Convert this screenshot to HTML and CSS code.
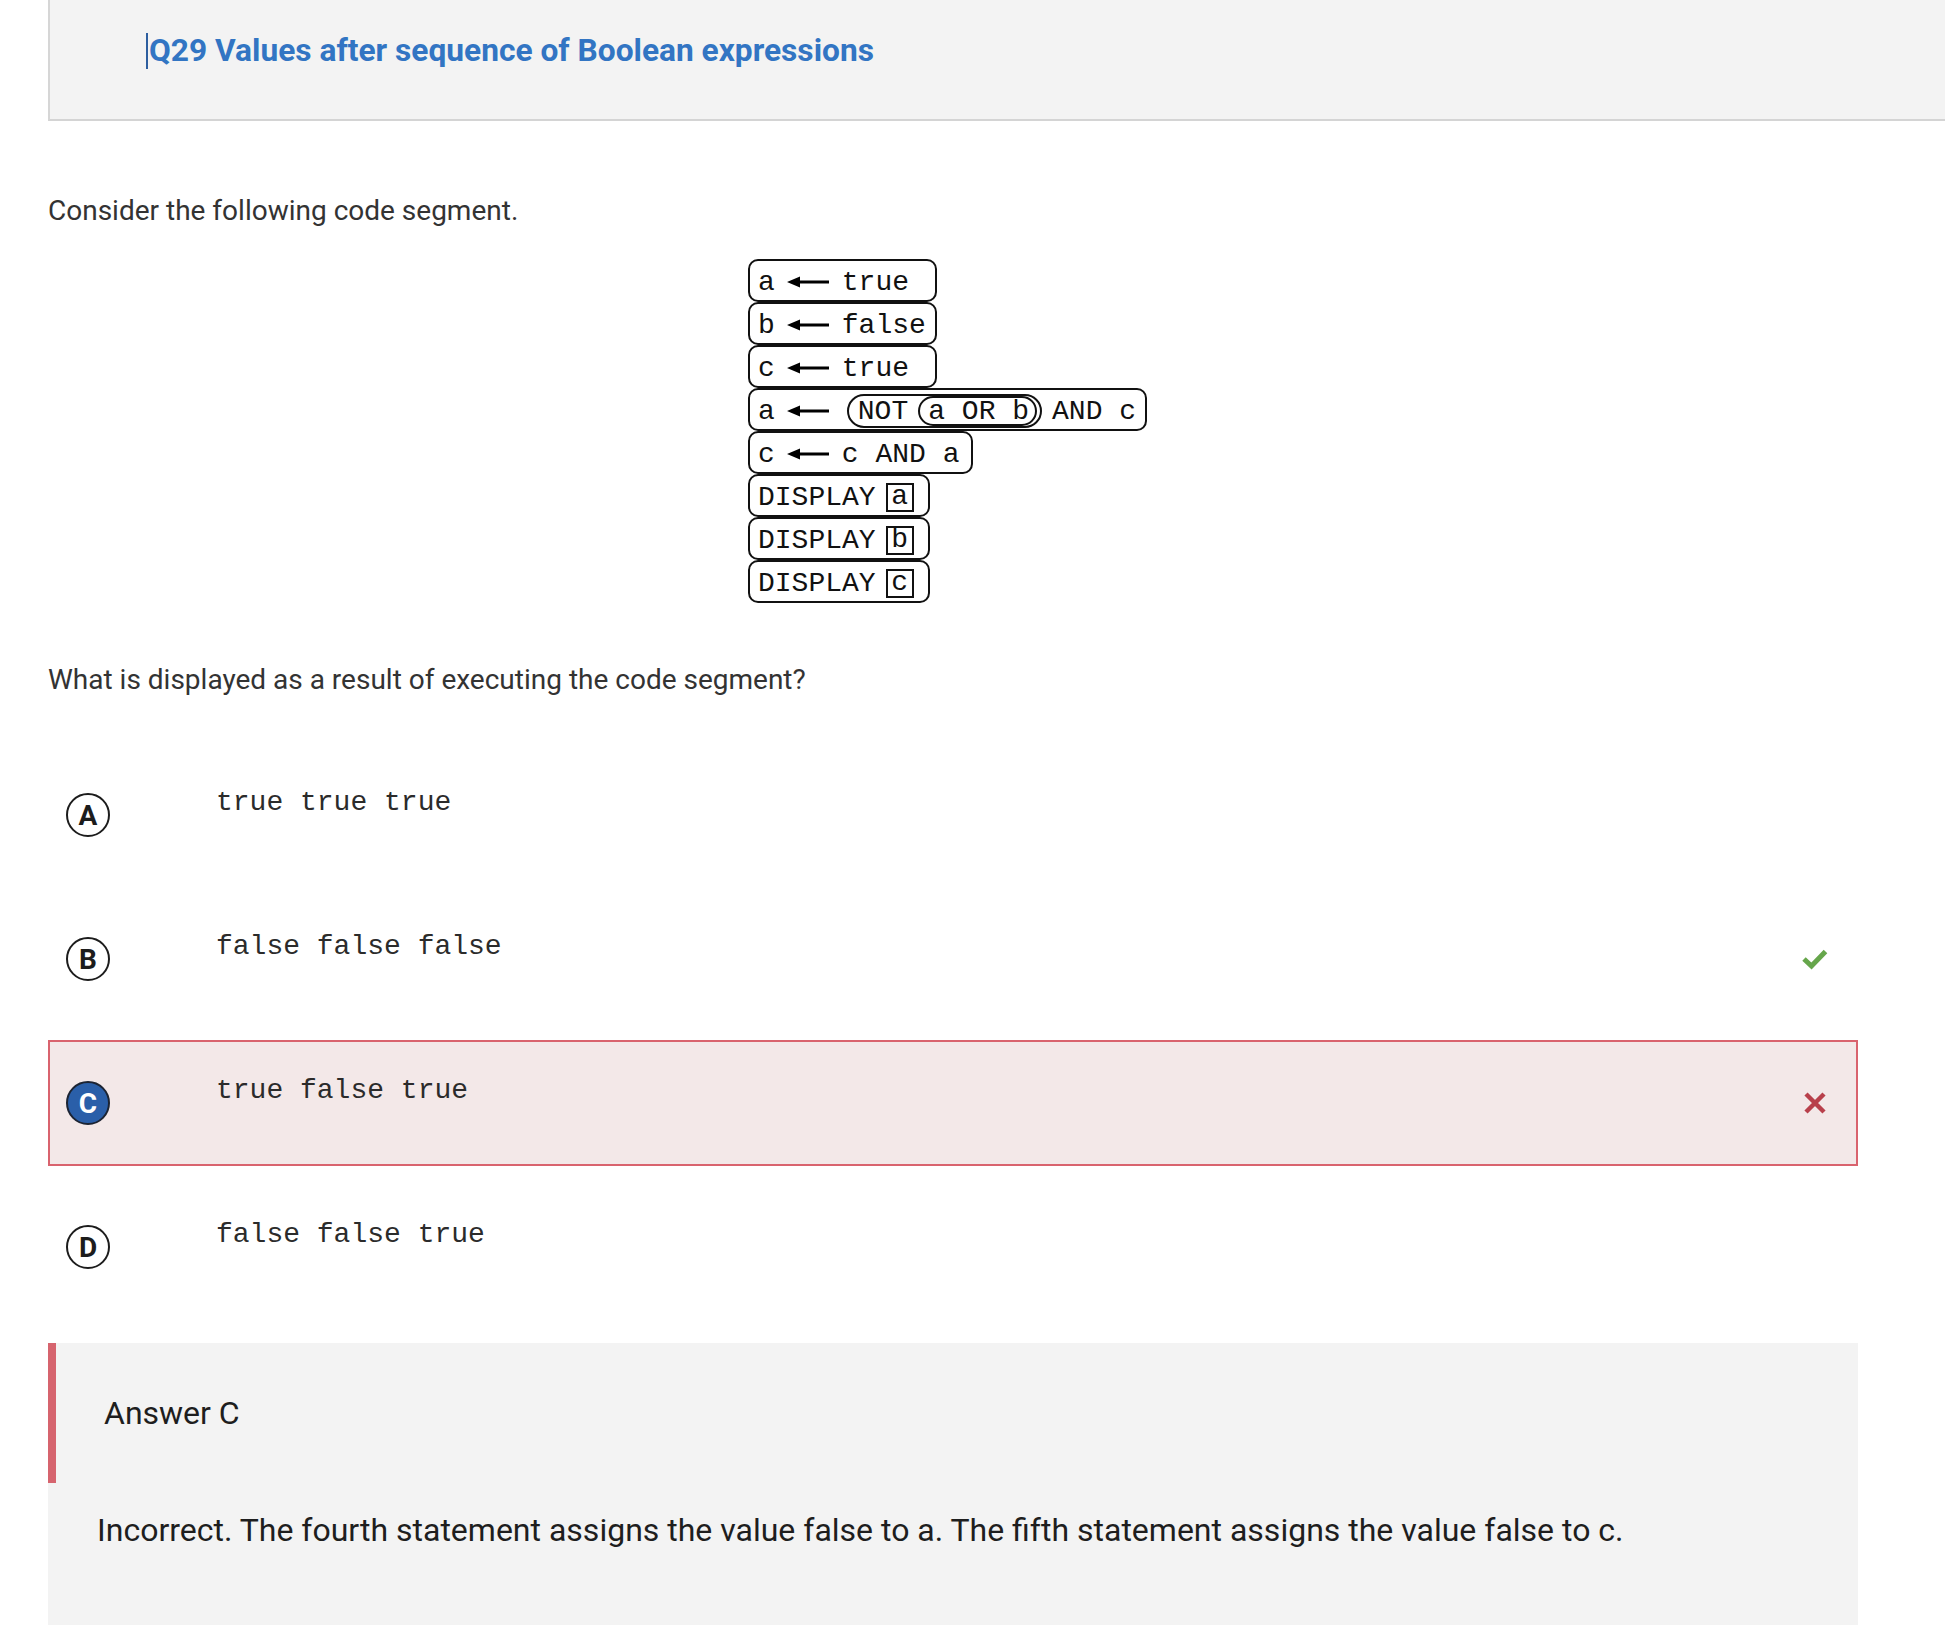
FILE: index.html
```html
<!DOCTYPE html>
<html lang="en">
<head>
<meta charset="utf-8">
<title>Q29 Values after sequence of Boolean expressions</title>
<link rel="stylesheet" href="styles.css">
</head>
<body>
<header class="qhead">
  <h1 class="qtitle"><span class="caret"></span>Q29 Values after sequence of Boolean expressions</h1>
</header>

<main class="main">
  <p class="prompt">Consider the following code segment.</p>

  <div class="code">
    <div class="stmt w-assign"><span class="v">a</span><svg class="arrow" viewBox="0 0 42 12" width="42" height="12"><path d="M0 6 L13 0.5 L13 4.5 L42 4.5 L42 7.5 L13 7.5 L13 11.5 Z" fill="#000"/></svg><span>true</span></div>
    <div class="stmt w-assign"><span class="v">b</span><svg class="arrow" viewBox="0 0 42 12" width="42" height="12"><path d="M0 6 L13 0.5 L13 4.5 L42 4.5 L42 7.5 L13 7.5 L13 11.5 Z" fill="#000"/></svg><span>false</span></div>
    <div class="stmt w-assign"><span class="v">c</span><svg class="arrow" viewBox="0 0 42 12" width="42" height="12"><path d="M0 6 L13 0.5 L13 4.5 L42 4.5 L42 7.5 L13 7.5 L13 11.5 Z" fill="#000"/></svg><span>true</span></div>
    <div class="stmt w-wide"><span class="v">a</span><svg class="arrow" viewBox="0 0 42 12" width="42" height="12"><path d="M0 6 L13 0.5 L13 4.5 L42 4.5 L42 7.5 L13 7.5 L13 11.5 Z" fill="#000"/></svg><span class="oval-out"><span>NOT</span><span class="oval-in">a OR b</span></span><span class="tail">AND c</span></div>
    <div class="stmt w-mid"><span class="v">c</span><svg class="arrow" viewBox="0 0 42 12" width="42" height="12"><path d="M0 6 L13 0.5 L13 4.5 L42 4.5 L42 7.5 L13 7.5 L13 11.5 Z" fill="#000"/></svg><span>c AND a</span></div>
    <div class="stmt w-disp"><span>DISPLAY</span><span class="slot">a</span></div>
    <div class="stmt w-disp"><span>DISPLAY</span><span class="slot">b</span></div>
    <div class="stmt w-disp"><span>DISPLAY</span><span class="slot">c</span></div>
  </div>

  <p class="prompt prompt-q">What is displayed as a result of executing the code segment?</p>

  <ol class="options">
    <li class="opt">
      <span class="letter">A</span>
      <span class="opt-text">true true true</span>
    </li>
    <li class="opt">
      <span class="letter">B</span>
      <span class="opt-text">false false false</span>
      <svg class="mark" viewBox="0 0 26 22" width="26" height="22"><polyline points="2,11 9.5,18 23.5,3.5" fill="none" stroke="#66a64b" stroke-width="5"/></svg>
    </li>
    <li class="opt opt-wrong">
      <span class="letter letter-sel">C</span>
      <span class="opt-text">true false true</span>
      <svg class="mark" viewBox="0 0 26 24" width="26" height="24"><path d="M4 3 L22 21 M22 3 L4 21" fill="none" stroke="#b8404b" stroke-width="4.5"/></svg>
    </li>
    <li class="opt">
      <span class="letter">D</span>
      <span class="opt-text">false false true</span>
    </li>
  </ol>

  <section class="answer">
    <h2 class="answer-head">Answer C</h2>
    <p class="answer-text">Incorrect. The fourth statement assigns the value false to a. The fifth statement assigns the value false to c.</p>
  </section>
</main>
</body>
</html>
```

FILE: styles.css
```css
* { box-sizing: border-box; }

html, body {
  margin: 0;
  padding: 0;
  background: #ffffff;
}

body {
  font-family: Roboto, "Liberation Sans", Arial, sans-serif;
  color: #333333;
}

/* ---------- header ---------- */
.qhead {
  margin-left: 48px;
  height: 121px;
  background: #f3f3f3;
  border-left: 2px solid #d6d6d6;
  border-bottom: 2px solid #d4d4d4;
  padding: 33px 0 0 96px;
}

.qtitle {
  margin: 0;
  font-size: 31.7px;
  line-height: 36px;
  font-weight: 700;
  color: #3275c3;
  display: flex;
  align-items: stretch;
}

.caret {
  width: 2px;
  background: #2d5e9f;
  margin-right: 1px;
}

/* ---------- main ---------- */
.main {
  margin-left: 48px;
  width: 1810px;
}

.prompt {
  margin: 73px 0 0 0;
  font-size: 28px;
  line-height: 34px;
  color: #333333;
}

.prompt-q {
  margin-top: 60px;
}

/* ---------- code diagram ---------- */
.code {
  margin: 31px 0 0 700px;
  display: flex;
  flex-direction: column;
  align-items: flex-start;
  font-family: "Liberation Mono", "Courier New", monospace;
  font-size: 28px;
  color: #111111;
}

.stmt {
  height: 43px;
  border: 2px solid #111111;
  border-radius: 10px;
  display: flex;
  align-items: center;
  padding: 3px 0 0 8px;
  white-space: pre;
  background: #ffffff;
}

.w-assign { width: 189px; }
.w-wide { width: 399px; }
.w-mid { width: 225px; }
.w-disp { width: 182px; }

.arrow {
  margin: 0 13px 0 12px;
  flex: none;
}

.oval-out {
  display: flex;
  align-items: center;
  height: 34px;
  border: 2px solid #111111;
  border-radius: 17px;
  padding: 0 3px 0 9px;
  margin-left: 5px;
}

.oval-in {
  display: flex;
  align-items: center;
  height: 30px;
  border: 2px solid #111111;
  border-radius: 15px;
  padding: 0 6px 0 8px;
  margin-left: 10px;
}

.tail {
  margin-left: 10px;
}

.slot {
  width: 28px;
  height: 29px;
  border: 2px solid #111111;
  margin-left: 10px;
  display: flex;
  align-items: center;
  justify-content: center;
  line-height: 1;
}

/* ---------- options ---------- */
.options {
  list-style: none;
  margin: 55px 0 0 0;
  padding: 0;
  display: flex;
  flex-direction: column;
  gap: 18px;
}

.opt {
  height: 126px;
  border: 2px solid transparent;
  display: flex;
  align-items: center;
  padding-left: 16px;
}

.opt-wrong {
  border-color: #d9636e;
  background: #f3e8e8;
}

.letter {
  width: 44px;
  height: 44px;
  flex: none;
  border: 2px solid #1c1c1c;
  border-radius: 50%;
  background: #ffffff;
  display: flex;
  align-items: center;
  justify-content: center;
  font-family: Roboto, "Liberation Sans", Arial, sans-serif;
  font-weight: 700;
  font-size: 28px;
  color: #1c1c1c;
}

.letter-sel {
  background: #2a5fa9;
  border-color: #1c2433;
  color: #ffffff;
}

.opt-text {
  margin-left: 106px;
  padding-bottom: 26px;
  font-family: "Liberation Mono", "Courier New", monospace;
  font-size: 28px;
  color: #2b2b2b;
  white-space: pre;
}

.mark {
  margin-left: auto;
  margin-right: 28px;
  flex: none;
}

/* ---------- answer ---------- */
.answer {
  margin-top: 33px;
  height: 282px;
  background: #f3f3f3;
}

.answer-head {
  margin: 0;
  height: 140px;
  border-left: 8px solid #d6646e;
  padding: 51px 0 0 48px;
  font-size: 32px;
  line-height: 38px;
  font-weight: 400;
  color: #1e1e1e;
}

.answer-text {
  margin: 28px 0 0 0;
  padding-left: 49px;
  font-size: 32px;
  line-height: 38px;
  color: #1e1e1e;
}
```
